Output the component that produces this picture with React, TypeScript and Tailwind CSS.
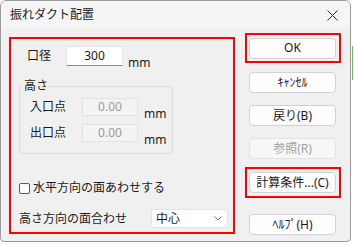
const font = { fontFamily: '"Noto Sans", "Noto Sans CJK JP", sans-serif' };

function Btn({ label, disabled }: { label: string; disabled?: boolean }) {
  return (
    <button
      type="button"
      className={
        disabled
          ? 'flex h-[21px] w-[87px] items-center justify-center rounded-[4px] border border-[#e3e3e3] bg-[#f7f7f7] text-[12px] text-[#a2a2a2]'
          : 'flex h-[21px] w-[87px] items-center justify-center rounded-[4px] border border-[#d2d2d2] bg-[#fdfdfd] text-[12px] text-[#1b1b1b]'
      }
    >
      {label}
    </button>
  );
}

// disabled numeric field inside the 高さ group
function HeightRow({ label, first }: { label: string; first?: boolean }) {
  return (
    <div className={first ? 'mt-[11px] flex h-[18px] items-center' : 'mt-[8px] flex h-[18px] items-center'}>
      <span className="ml-[10px] w-[52px]">{label}</span>
      <div className="flex h-[18px] w-[56px] items-center justify-center border border-[#e2e2e2] bg-[#f3f3f3] text-[#9c9c9c]">
        0.00
      </div>
      <span className="ml-[6px] mt-[13px]">mm</span>
    </div>
  );
}

export default function App() {
  return (
    <div className="relative h-[246px] w-[354px] bg-white text-[12px] text-[#1b1b1b]" style={font}>
      <div className="absolute left-[352px] top-[46px] h-[34px] w-px bg-[#6bbf6b]" />
      <div className="flex h-[242px] w-[351px] flex-col overflow-hidden rounded-t-[6px] rounded-b-[4px] border border-[#9a9a9a] bg-[#f0f0f0]">
        {/* title bar */}
        <div className="flex h-[27px] shrink-0 items-center justify-between bg-[#f5f5f5] pl-[9px] pr-[12px]">
          <span className="text-[12px] leading-none">振れダクト配置</span>
          <svg width="11" height="11" viewBox="0 0 11 11" className="mt-[2px]">
            <path d="M0.5 0.5L10.5 10.5M10.5 0.5L0.5 10.5" stroke="#2a2a2a" strokeWidth="1" />
          </svg>
        </div>

        <div className="flex flex-1 items-start pl-[8px]">
          {/* left panel */}
          <div className="mt-[9px] flex h-[197px] w-[226px] flex-col border-2 border-[#ff0000] pl-[8px]">
            <div className="mt-[7px] flex h-[20px] items-center">
              <span className="ml-[8px] w-[39px]">口径</span>
              <div className="flex h-[20px] w-[57px] items-center justify-center border border-[#e6e6e6] border-b-[#8a8a8a] bg-white">
                300
              </div>
              <span className="ml-[5px] mt-[14px]">mm</span>
            </div>

            <div className="relative mt-[20px] flex h-[68px] w-[154px] flex-col rounded-[2px] border border-[#dcdcdc]">
              <span className="absolute -top-[9px] left-[3px] bg-[#f0f0f0] px-[1px] leading-[16px]">高さ</span>
              <HeightRow label="入口点" first />
              <HeightRow label="出口点" />
            </div>

            <label className="mt-[26px] flex h-[16px] items-center">
              <span className="h-[11px] w-[11px] rounded-[2px] border border-[#5a5a5a] bg-white" />
              <span className="ml-[3px]">水平方向の面あわせする</span>
            </label>

            <div className="mt-[13px] flex h-[19px] items-center">
              <span className="w-[132px]">高さ方向の面合わせ</span>
              <div className="flex h-[19px] w-[77px] items-center justify-between rounded-[3px] border border-[#e3e3e3] bg-white pl-[4px] pr-[5px]">
                <span>中心</span>
                <svg width="8" height="5" viewBox="0 0 8 5">
                  <path d="M0.5 0.5L4 4L7.5 0.5" stroke="#7a7a7a" strokeWidth="1" fill="none" />
                </svg>
              </div>
            </div>
          </div>

          {/* right column */}
          <div className="ml-[10px] flex w-[96px] flex-col">
            <div className="mt-[5px] flex h-[30px] w-[96px] items-center border-2 border-[#ff0000] pl-[2px]">
              <Btn label="OK" />
            </div>
            <div className="ml-[4px] mt-[9px] flex flex-col gap-[12px]">
              <Btn label="ｷｬﾝｾﾙ" />
              <Btn label="戻り(B)" />
              <Btn label="参照(R)" disabled />
            </div>
            <div className="mt-[8px] flex h-[31px] w-[96px] items-center border-2 border-[#ff0000] pl-[2px]">
              <Btn label="計算条件...(C)" />
            </div>
            <div className="ml-[4px] mt-[16px]">
              <Btn label="ﾍﾙﾌﾟ(H)" />
            </div>
          </div>
        </div>
      </div>
    </div>
  );
}
